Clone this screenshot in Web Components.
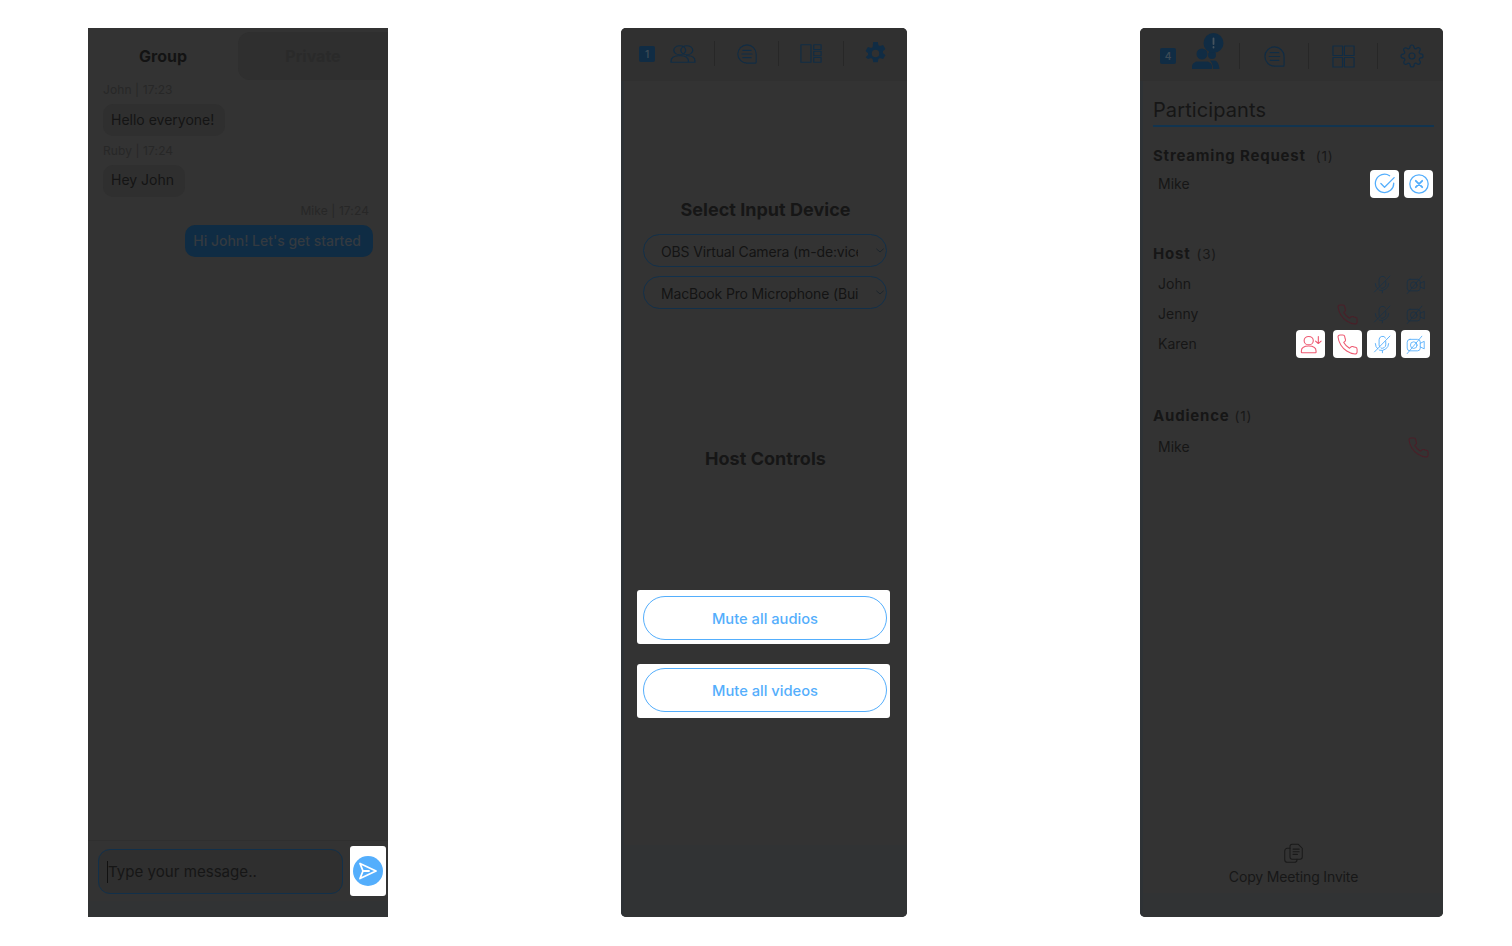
<!DOCTYPE html>
<html lang="en"><head><meta charset="utf-8"><title>Meeting panels</title>
<style>
html,body{margin:0;padding:0;background:#fff}
body{font-family:Inter,"Liberation Sans",sans-serif;-webkit-font-smoothing:antialiased}
</style></head><body>
<x-app></x-app>
<script>
const NAVY='#102c44',BLUE='#54aefc',RED='#ee5a72',DRED='#4a1f28';
const P={
phone:'<path d="M22 16.92v3a2 2 0 0 1-2.18 2 19.79 19.79 0 0 1-8.63-3.07 19.5 19.5 0 0 1-6-6 19.79 19.79 0 0 1-3.07-8.67A2 2 0 0 1 4.11 2h3a2 2 0 0 1 2 1.72c.127.96.361 1.903.7 2.81a2 2 0 0 1-.45 2.11L8.09 9.91a16 16 0 0 0 6 6l1.27-1.27a2 2 0 0 1 2.11-.45c.907.339 1.85.573 2.81.7A2 2 0 0 1 22 16.92z"/>',
mic:'<path d="M9.5 15.800A4.300 4.300 0 0 1 8.500 13V7a4.200 4.200 0 0 1 7.800-2.200M16.500 9v4a4.300 4.300 0 0 1-5.300 4.100"/><path d="M4 11.500a8.500 8.500 0 0 0 3 6.500M9 19.500a8.500 8.500 0 0 0 11-8M12.500 20v2.500M3 21.500 21.500 2.500"/>',
video:'<rect x="1.500" y="5.500" width="16.500" height="14.500" rx="3.500"/><circle cx="9.800" cy="12.800" r="4.200"/><path d="M18 10.500 23 8v9.500L18 15M1.500 23.500 20 1.500"/>',
personDown:'<circle cx="9.500" cy="8" r="5"/><path d="M1.500 22v-1.500c0-3.500 3-6 8-6s8 2.500 8 6V22a.5.5 0 0 1-.5.5H2a.5.5 0 0 1-.5-.5zM20 3v8M17 8.500l3 3 3-3"/>',
check:'<path d="M21.500 11a10 10 0 1 1-4.500-8"/><path d="M7.500 11.500l4 4L22 5"/>',
cross:'<circle cx="12" cy="12" r="10"/><path d="M8.500 8.500l7 7M15.500 8.500l-7 7" stroke-width="2"/>',
chat:'<path d="M12 2a10 10 0 1 0 0 20h9a1 1 0 0 0 1-1v-9A10 10 0 0 0 12 2z"/><path d="M7.500 8h9M6.500 12h11M7.500 16h9"/>',
people:'<circle cx="9" cy="7.500" r="5.500"/><circle cx="15.500" cy="7.500" r="5.500"/><path d="M1 22v-2c0-3.500 3-6 6.500-6h3c3.500 0 6.500 2.500 6.500 6v2zM15 14h2c3.500 0 6 2.500 6 6v2h-6"/>',
layout:'<rect x="1" y="2" width="11" height="20"/><rect x="15" y="2" width="8" height="5.500"/><rect x="15" y="9.500" width="8" height="5"/><rect x="15" y="16.500" width="8" height="5.500"/>',
grid:'<rect x="1" y="1" width="10" height="10"/><rect x="13" y="1" width="10" height="10"/><rect x="1" y="13" width="10" height="10"/><rect x="13" y="13" width="10" height="10"/>',
gear:'<circle cx="12" cy="12" r="3"/><path d="M19.400 15a1.650 1.650 0 0 0 .33 1.820l.06.06a2 2 0 1 1-2.830 2.830l-.06-.06a1.650 1.650 0 0 0-2.820 1.170V21a2 2 0 1 1-4 0v-.09a1.650 1.650 0 0 0-2.820-1.170l-.06.06a2 2 0 1 1-2.830-2.830l.06-.06a1.650 1.650 0 0 0-1.170-2.820H3a2 2 0 1 1 0-4h.09a1.650 1.650 0 0 0 1.170-2.820l-.06-.06a2 2 0 1 1 2.830-2.830l.06.06a1.650 1.650 0 0 0 2.820-1.170V3a2 2 0 1 1 4 0v.09a1.650 1.650 0 0 0 2.820 1.170l.06-.06a2 2 0 1 1 2.830 2.830l-.06.06a1.650 1.650 0 0 0 1.170 2.820H21a2 2 0 1 1 0 4h-.09a1.650 1.650 0 0 0-1.510 1z"/>',
gearFill:'<path fill="currentColor" stroke="none" fill-rule="evenodd" d="M9.800 1h4.400l.6 3.100 1.500.800 3-1 2.200 3.800-2.400 2.100v1.700l2.400 2.100-2.200 3.800-3-1-1.500.800-.6 3.100H9.800l-.6-3.100-1.500-.800-3 1L2.500 15.500l2.400-2.100v-1.700L2.500 9.600l2.200-3.800 3 1 1.500-.800zM12 8.500a3.600 3.600 0 1 0 0 7.200 3.600 3.600 0 0 0 0-7.200z"/>',
crowd:'<g fill="currentColor" stroke="none"><circle cx="10" cy="21" r="5.500"/><circle cx="20" cy="22" r="4"/><path d="M0 36v-2.500c0-3 3-5 6-5h8c3 0 6 2 6 5V36z"/><path d="M19 27.500h3c2.500 0 5 2.500 5.500 8.500h-6.500c0-3.500-1-6.500-3-8.500z"/><circle cx="21.500" cy="10" r="10"/></g><path d="M21.500 5.500v5.500M21.500 14v.5" stroke="#46535d" stroke-width="1.800"/>',
copy:'<path d="M8 4a2.500 2.500 0 0 1 2.500-2.500h7L22 6v10a2.500 2.500 0 0 1-2.500 2.500h-9A2.500 2.500 0 0 1 8 16z"/><path d="M8 6H5a3 3 0 0 0-3 3v10a3 3 0 0 0 3 3h8a3 3 0 0 0 3-3v-.5"/><path d="M11.500 7h7M11.500 10h7M11.500 13h5"/>',
send:'<path d="M7 7.500 23 15 7 22.500 10 15z"/><path d="M10 15h6"/>',
chev:'<path d="M2 5l10 14L22 5"/>'
};
class XIcon extends HTMLElement{
 connectedCallback(){
  const n=this.getAttribute('name'),w=this.getAttribute('w')||22,h=this.getAttribute('h')||w,vb=this.getAttribute('vb')||'0 0 24 24',c=this.getAttribute('color')||'currentColor',sw=this.getAttribute('sw')||1.2;
  this.attachShadow({mode:'open'}).innerHTML=`<style>:host{display:inline-flex;width:${w}px;height:${h}px;color:${c};flex:none}svg{width:100%;height:100%;display:block}</style><svg viewBox="${vb}" fill="none" stroke="currentColor" stroke-width="${sw}" stroke-linecap="round" stroke-linejoin="round" preserveAspectRatio="none">${P[n]}</svg>`;
 }
}
customElements.define('x-icon',XIcon);

class XBubble extends HTMLElement{
 connectedCallback(){
  const mine=this.hasAttribute('mine');
  this.attachShadow({mode:'open'}).innerHTML=`<style>
  :host{display:flex;flex-direction:column;align-items:${mine?'flex-end':'flex-start'}}
  .m{font-size:12px;line-height:15px;letter-spacing:.1px;color:#272727;${mine?'margin-right:4px;':''}}
  .b{margin-top:7px;height:32px;box-sizing:border-box;padding:0 ${mine?'12px 2px 8px':'11px 2px 8px'};display:flex;align-items:center;border-radius:10px;font-size:14px;
     background:${mine?'#0f2c44':'#2f2f2f'};color:${mine?'#343a40':'#141414'};${mine?'font-weight:500;letter-spacing:-.03px':''}}
  </style><div class="m">${this.getAttribute('meta')}</div><div class="b"><slot></slot></div>`;
 }
}
customElements.define('x-bubble',XBubble);

class XChat extends HTMLElement{
 constructor(){super();this.attachShadow({mode:'open'}).innerHTML=`<style>
 :host{display:flex;flex-direction:column;width:300px;background:#333;flex:none}
 .tabs{display:flex;height:53px;flex:none}
 .tab{flex:1;display:flex;align-items:center;justify-content:center;font-size:16px;font-weight:700;color:#131313;padding-top:2px;box-sizing:border-box}
 .tab.off{background:#2f2f2f;color:#2a2a2a;margin-top:4px;padding-top:0;height:48px;border-radius:12px 0 0 12px}
 .msgs{flex:1;padding:1px 15px 0;display:flex;flex-direction:column;gap:6.5px}
 .foot{height:77px;border-top:1px solid #2f2f2f;box-sizing:border-box;display:flex;padding:5px 2px 0 10px;gap:7px;align-items:flex-start;background:linear-gradient(#333 60px,#313334 60px)}
 .inp{margin-top:3px;width:245px;height:45px;box-sizing:border-box;border:1px solid #12304a;border-radius:12px;font-size:15.1px;color:#161616;display:flex;align-items:center;padding:1px 0 0 8px;background:#2f2f2f}
 .inp span{border-left:1px solid #111;line-height:22px}
 .send{width:36px;height:50px;background:#fff;border-radius:3px;display:flex;align-items:center;justify-content:center}
 .c{width:30px;height:30px;border-radius:50%;background:${BLUE};display:flex}
 </style>
 <div class="tabs"><div class="tab">Group</div><div class="tab off">Private</div></div>
 <div class="msgs"><slot></slot></div>
 <div class="foot"><div class="inp"><span>Type your message..</span></div><div class="send"><div class="c"><x-icon name="send" w="30" vb="0 0 30 30" color="#fff" sw="1.800"></x-icon></div></div></div>`;}
}
customElements.define('x-chat',XChat);

class XToolbar extends HTMLElement{
 connectedCallback(){
  const pl=this.getAttribute('pad')||18,n=this.getAttribute('count'),pt=this.getAttribute('pt')||0,pb=this.getAttribute('pb')||0;
  this.attachShadow({mode:'open'}).innerHTML=`<style>
  :host{display:flex;align-items:center;height:53px;flex:none;padding:${pt}px 0 ${pb}px ${pl}px;background:#303030;box-sizing:border-box;color:${NAVY}}
  .b{width:16px;height:16px;background:${NAVY};border-radius:2px;color:#3c4a55;font-size:10px;font-weight:600;display:flex;align-items:center;justify-content:center;flex:none}
  </style><div class="b">${n}</div><slot></slot>`;
 }
}
customElements.define('x-toolbar',XToolbar);

class XSep extends HTMLElement{
 connectedCallback(){const h=this.getAttribute('h')||25;this.attachShadow({mode:'open'}).innerHTML=`<style>:host{display:block;width:1px;height:${h}px;background:#272727;flex:none}</style>`;}
}
customElements.define('x-sep',XSep);

class XDevice extends HTMLElement{
 constructor(){super();this.attachShadow({mode:'open'}).innerHTML=`<style>
 :host{display:flex;flex-direction:column;width:286px;background:#333;border-radius:5px;overflow:hidden;flex:none}
 .body{flex:1;border-left:3px solid #2e3235;display:flex;flex-direction:column;align-items:stretch;background:linear-gradient(#333 764px,#313334 764px)}
 h2{margin:0;font-size:18px;font-weight:700;color:#161616;text-align:center;line-height:22px;letter-spacing:.03px}
 .t1{margin-top:118px}.t2{margin-top:139px}
 .sel{appearance:none;-webkit-appearance:none;display:block;font:14px Inter,"Liberation Sans",sans-serif;letter-spacing:-.15px;color:#141414;background:transparent;border:1px solid #12304a;border-radius:17px;width:244px;height:33px;box-sizing:border-box;margin:0 0 0 19px;padding:1px 28px 0 17px;outline:0}
 .wrap{position:relative;height:33px}
 .wrap x-icon{position:absolute;left:252px;top:14px}
 .s1{margin-top:13px}.s2{margin-top:9px}
 .card{margin-left:13px;width:253px;height:54px;background:#fff;border-radius:3px;box-sizing:border-box;padding:6px 0 0 6px;flex:none}
 .card button{display:block;width:244px;height:44px;border:1px solid ${BLUE};border-radius:22px;background:#fff;color:${BLUE};font:500 14.7px Inter,"Liberation Sans",sans-serif;padding:1px 0 0}
 .c1{margin-top:120px}.c2{margin-top:20px;padding-top:4px}
 </style>
 <slot name="bar"></slot>
 <div class="body">
  <h2 class="t1">Select Input Device</h2>
  <div class="wrap s1"><select class="sel" aria-label="Camera"><option>OBS Virtual Camera (m-de:vice)</option></select><x-icon name="chev" w="8" h="5" color="#17222b" sw="3"></x-icon></div>
  <div class="wrap s2"><select class="sel" aria-label="Microphone"><option>MacBook Pro Microphone (Built-in)</option></select><x-icon name="chev" w="8" h="5" color="#17222b" sw="3"></x-icon></div>
  <h2 class="t2">Host Controls</h2>
  <div class="card c1"><button>Mute all audios</button></div>
  <div class="card c2"><button>Mute all videos</button></div>
 </div>`;}
}
customElements.define('x-device',XDevice);

class XSection extends HTMLElement{
 connectedCallback(){
  this.attachShadow({mode:'open'}).innerHTML=`<style>
  :host{display:block}
  .h{height:18px;line-height:18px;font-size:15px;font-weight:700;letter-spacing:.8px;color:#161616;display:flex;align-items:center}
  .h span{font-size:13.5px;font-weight:400;letter-spacing:.8px;margin-left:${this.getAttribute('gap')||6}px;color:#181818}
  .r{margin-top:${this.getAttribute('mt')||6}px}
  </style><div class="h">${this.getAttribute('title')}<span>(${this.getAttribute('n')})</span></div><div class="r"><slot></slot></div>`;
 }
}
customElements.define('x-section',XSection);

class XRow extends HTMLElement{
 connectedCallback(){
  this.attachShadow({mode:'open'}).innerHTML=`<style>
  :host{display:flex;align-items:center;height:${this.getAttribute('h')||30}px;padding:0 ${this.getAttribute('pr')||4}px 0 5px;gap:5px;font-size:14px;color:#161616}
  .n{flex:1;padding-bottom:2px}
  </style><div class="n">${this.getAttribute('name')}</div><slot></slot>`;
 }
}
customElements.define('x-row',XRow);

class XAct extends HTMLElement{
 connectedCallback(){
  const on=this.hasAttribute('on');
  this.attachShadow({mode:'open'}).innerHTML=`<style>
  :host{display:flex;width:29px;height:28px;align-items:center;justify-content:center;border-radius:4px;flex:none;${on?'background:#fff;':''}}
  </style><slot></slot>`;
 }
}
customElements.define('x-act',XAct);

class XPeople extends HTMLElement{
 constructor(){super();this.attachShadow({mode:'open'}).innerHTML=`<style>
 :host{display:flex;flex-direction:column;width:303px;background:#333;border-radius:5px;overflow:hidden;flex:none}
 .body{flex:1;border-left:3px solid #2e3235;padding:17px 9px 0 10px;display:flex;flex-direction:column;background:linear-gradient(#333 812px,#313334 812px)}
 h1{margin:0;font-size:20px;font-weight:400;line-height:24px;letter-spacing:.1px;color:#161616;padding-bottom:3px;border-bottom:2px solid #12344f}
 .s1{margin-top:20px}.s2{margin-top:47px}.s3{margin-top:48px}
 .foot{margin-top:auto;display:flex;flex-direction:column;align-items:center;gap:4px;padding-bottom:32px;font-size:14px;color:#171717;letter-spacing:-.15px}
 </style>
 <slot name="bar"></slot>
 <div class="body">
  <h1>Participants</h1>
  <div class="s1"><slot name="a"></slot></div>
  <div class="s2"><slot name="b"></slot></div>
  <div class="s3"><slot name="c"></slot></div>
  <div class="foot"><x-icon name="copy" w="21" color="#1a1a1a"></x-icon>Copy Meeting Invite</div>
 </div>`;}
}
customElements.define('x-people',XPeople);

class XApp extends HTMLElement{
 constructor(){super();
 const mic=(c)=>`<x-icon name="mic" w="20" color="${c}" sw="1.100"></x-icon>`;
 const vid=(c)=>`<x-icon name="video" w="19" color="${c}" sw="1.100"></x-icon>`;
 const ph=(c)=>`<x-icon name="phone" w="23" color="${c}" sw="1.100"></x-icon>`;
 const D='#1b3144';
 this.attachShadow({mode:'open'}).innerHTML=`<style>
 :host{display:flex;gap:233px;padding:28px 0 29px 88px;height:946px;box-sizing:border-box;font-family:Inter,"Liberation Sans",sans-serif;align-items:stretch}
 </style>
 <x-chat>
  <x-bubble meta="John | 17:23">Hello everyone!</x-bubble>
  <x-bubble meta="Ruby | 17:24">Hey John</x-bubble>
  <x-bubble meta="Mike | 17:24" mine>Hi John! Let's get started</x-bubble>
 </x-chat>
 <x-device>
  <x-toolbar slot="bar" count="1" pad="18" pb="2">
   <x-icon name="people" w="26" h="20" style="margin-left:15px"></x-icon>
   <x-sep style="margin-left:18px"></x-sep>
   <x-icon name="chat" w="22" style="margin-left:21px"></x-icon>
   <x-sep style="margin-left:20px"></x-sep>
   <x-icon name="layout" w="22" h="21" style="margin-left:21px"></x-icon>
   <x-sep style="margin-left:21px"></x-sep>
   <x-icon name="gearFill" w="25" style="margin-left:19px"></x-icon>
  </x-toolbar>
 </x-device>
 <x-people>
  <x-toolbar slot="bar" count="4" pad="20" pt="3">
   <x-icon name="crowd" w="32" h="36" vb="0 0 32 36" style="margin-left:16px;margin-top:-10px"></x-icon>
   <x-sep h="26" style="margin-left:15px"></x-sep>
   <x-icon name="chat" w="23" style="margin-left:23px"></x-icon>
   <x-sep h="26" style="margin-left:22px"></x-sep>
   <x-icon name="grid" w="23" style="margin-left:23px"></x-icon>
   <x-sep h="26" style="margin-left:22px"></x-sep>
   <x-icon name="gear" w="24" style="margin-left:22px"></x-icon>
  </x-toolbar>
  <x-section slot="a" title="Streaming Request" n="1" gap="10" mt="5">
   <x-row name="Mike" h="28" pr="1">
    <x-act on><x-icon name="check" w="22" color="${BLUE}" sw="1.400"></x-icon></x-act>
    <x-act on><x-icon name="cross" w="22" color="${BLUE}" sw="1.400"></x-icon></x-act>
   </x-row>
  </x-section>
  <x-section slot="b" title="Host" n="3" mt="6">
   <x-row name="John"><x-act>${mic(D)}</x-act><x-act>${vid(D)}</x-act></x-row>
   <x-row name="Jenny"><x-act>${ph(DRED)}</x-act><x-act>${mic(D)}</x-act><x-act>${vid(D)}</x-act></x-row>
   <x-row name="Karen"><x-act on style="margin-right:3px"><x-icon name="personDown" w="22" h="20" color="${RED}" sw="1.200"></x-icon></x-act><x-act on>${ph(RED)}</x-act><x-act on>${mic(BLUE)}</x-act><x-act on>${vid(BLUE)}</x-act></x-row>
  </x-section>
  <x-section slot="c" title="Audience" n="1" gap="5" mt="7">
   <x-row name="Mike" pr="4">${ph(DRED)}</x-row>
  </x-section>
 </x-people>`;}
}
customElements.define('x-app',XApp);
</script>
</body></html>
